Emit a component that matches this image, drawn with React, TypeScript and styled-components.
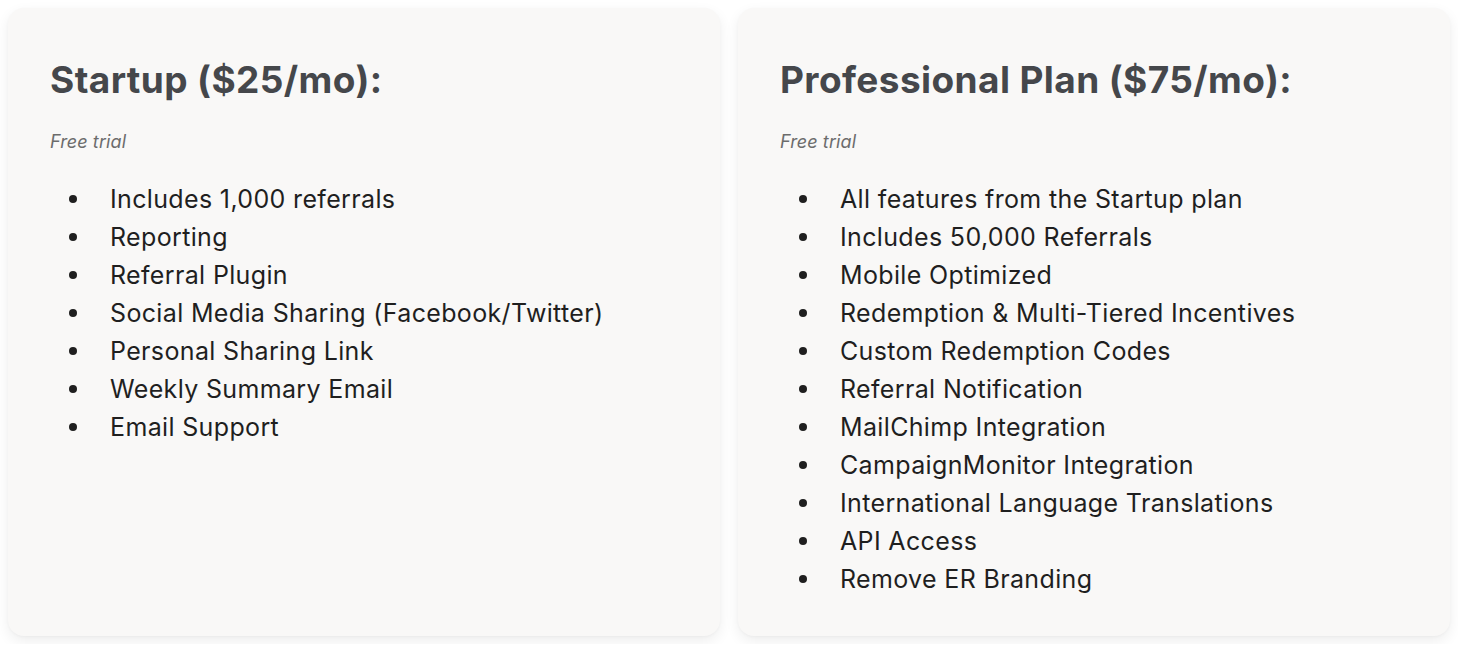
import React from "react";
import styled, { createGlobalStyle } from "styled-components";

const Global = createGlobalStyle`
  html, body { margin: 0; padding: 0; background: #ffffff; }
  body { padding: 8px; font-family: Inter, "Liberation Sans", sans-serif; }
`;

const Grid = styled.div`
  display: grid;
  grid-template-columns: 1fr 1fr;
  gap: 18px;
`;

const Card = styled.section`
  background: #f9f8f7;
  border-radius: 16px;
  height: 628px;
  box-sizing: border-box;
  padding: 52px 42px 0 42px;
  box-shadow: 0 5px 14px rgba(0, 0, 0, 0.07), 0 1px 3px rgba(0, 0, 0, 0.03);
`;

const Title = styled.h2`
  margin: 0;
  font-size: 37px;
  line-height: 40px;
  font-weight: 700;
  color: #45474b;
  letter-spacing: 0.4px;
`;

const Sub = styled.p`
  margin: 30px 0 0 0;
  font-size: 18px;
  line-height: 24px;
  font-style: italic;
  color: #6c6c6c;
  letter-spacing: 0.1px;
`;

const List = styled.ul`
  margin: 26px 0 0 0;
  padding: 0 0 0 19px;
  list-style: none;
`;

const Item = styled.li`
  display: flex;
  align-items: center;
  font-size: 25px;
  line-height: 38px;
  color: #1f1f1f;
  letter-spacing: 0.35px;
  &::before {
    content: "";
    flex: none;
    width: 8px;
    height: 8px;
    border-radius: 50%;
    background: #1f1f1f;
    margin-right: 33px;
  }
`;

const plans = [
  {
    title: "Startup ($25/mo):",
    items: [
      "Includes 1,000 referrals",
      "Reporting",
      "Referral Plugin",
      "Social Media Sharing (Facebook/Twitter)",
      "Personal Sharing Link",
      "Weekly Summary Email",
      "Email Support",
    ],
  },
  {
    title: "Professional Plan ($75/mo):",
    items: [
      "All features from the Startup plan",
      "Includes 50,000 Referrals",
      "Mobile Optimized",
      "Redemption & Multi-Tiered Incentives",
      "Custom Redemption Codes",
      "Referral Notification",
      "MailChimp Integration",
      "CampaignMonitor Integration",
      "International Language Translations",
      "API Access",
      "Remove ER Branding",
    ],
  },
];

export default function App() {
  return (
    <>
      <Global />
      <Grid>
        {plans.map((p) => (
          <Card key={p.title}>
            <Title>{p.title}</Title>
            <Sub>Free trial</Sub>
            <List>
              {p.items.map((it) => (
                <Item key={it}>{it}</Item>
              ))}
            </List>
          </Card>
        ))}
      </Grid>
    </>
  );
}
